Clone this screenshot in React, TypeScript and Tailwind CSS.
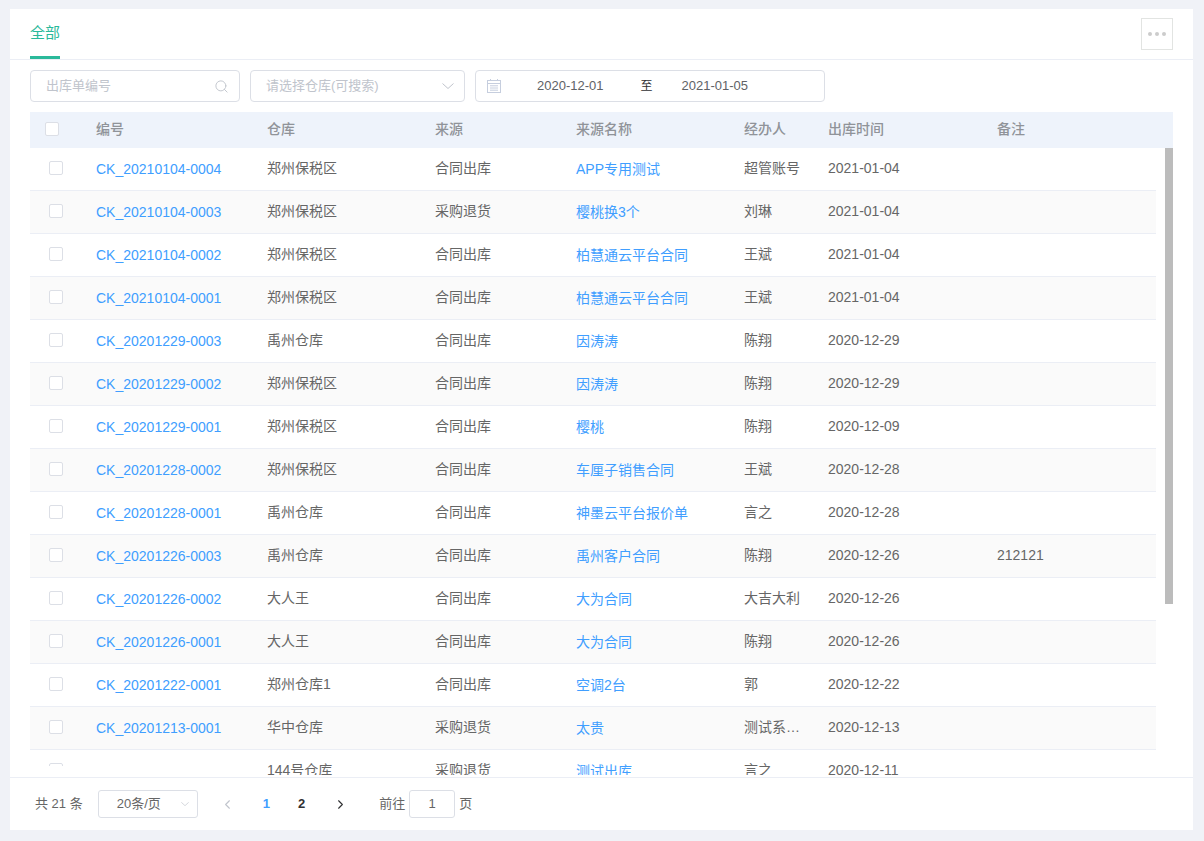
import { ChevronLeft, ChevronRight, Search } from 'lucide-react';

type Row = {
    code: string;
    warehouse: string;
    source: string;
    sourceName: string;
    handler: string;
    date: string;
    remark?: string;
};

const rows: Row[] = [
    { code: 'CK_20210104-0004', warehouse: '郑州保税区', source: '合同出库', sourceName: 'APP专用测试', handler: '超管账号', date: '2021-01-04' },
    { code: 'CK_20210104-0003', warehouse: '郑州保税区', source: '采购退货', sourceName: '樱桃换3个', handler: '刘琳', date: '2021-01-04' },
    { code: 'CK_20210104-0002', warehouse: '郑州保税区', source: '合同出库', sourceName: '柏慧通云平台合同', handler: '王斌', date: '2021-01-04' },
    { code: 'CK_20210104-0001', warehouse: '郑州保税区', source: '合同出库', sourceName: '柏慧通云平台合同', handler: '王斌', date: '2021-01-04' },
    { code: 'CK_20201229-0003', warehouse: '禹州仓库', source: '合同出库', sourceName: '因涛涛', handler: '陈翔', date: '2020-12-29' },
    { code: 'CK_20201229-0002', warehouse: '郑州保税区', source: '合同出库', sourceName: '因涛涛', handler: '陈翔', date: '2020-12-29' },
    { code: 'CK_20201229-0001', warehouse: '郑州保税区', source: '合同出库', sourceName: '樱桃', handler: '陈翔', date: '2020-12-09' },
    { code: 'CK_20201228-0002', warehouse: '郑州保税区', source: '合同出库', sourceName: '车厘子销售合同', handler: '王斌', date: '2020-12-28' },
    { code: 'CK_20201228-0001', warehouse: '禹州仓库', source: '合同出库', sourceName: '神墨云平台报价单', handler: '言之', date: '2020-12-28' },
    { code: 'CK_20201226-0003', warehouse: '禹州仓库', source: '合同出库', sourceName: '禹州客户合同', handler: '陈翔', date: '2020-12-26', remark: '212121' },
    { code: 'CK_20201226-0002', warehouse: '大人王', source: '合同出库', sourceName: '大为合同', handler: '大吉大利', date: '2020-12-26' },
    { code: 'CK_20201226-0001', warehouse: '大人王', source: '合同出库', sourceName: '大为合同', handler: '陈翔', date: '2020-12-26' },
    { code: 'CK_20201222-0001', warehouse: '郑州仓库1', source: '合同出库', sourceName: '空调2台', handler: '郭', date: '2020-12-22' },
    { code: 'CK_20201213-0001', warehouse: '华中仓库', source: '采购退货', sourceName: '太贵', handler: '测试系…', date: '2020-12-13' },
    { code: '', warehouse: '144号仓库', source: '采购退货', sourceName: '测试出库', handler: '言之', date: '2020-12-11' },
];

const columns = 'grid grid-cols-[66px_171px_168px_141px_168px_84px_169px_1fr]';

function Checkbox() {
    return <span className="block h-[14px] w-[14px] shrink-0 rounded-[2px] border border-[#dcdfe6] bg-white" />;
}

function CalendarIcon() {
    return (
        <svg width="14" height="14" viewBox="0 0 14 14" fill="none" stroke="#c6cede" strokeWidth="1">
            <rect x="0.5" y="1.5" width="13" height="12" />
            <path d="M0.5 4.5h13M3 6.8h8M3 9h8M3 11.2h8M3.5 0v2M10.5 0v2" />
        </svg>
    );
}

// flat select arrow, lucide's chevron is too steep for this one
function SelectArrow({ width }: { width: number }) {
    return (
        <svg width={width} height={width / 2} viewBox="0 0 12 6" fill="none" stroke="#c0c4cc" strokeWidth="1">
            <path d="M0.5 0.5L6 5.5L11.5 0.5" />
        </svg>
    );
}

export default function App() {
    return (
        <div
            className="h-[841px] w-[1204px] overflow-hidden bg-[#f0f2f7] pt-[9px] pr-[11px] pb-[11px] pl-[10px] text-[14px] text-[#666]"
            style={{ fontFamily: '"Liberation Sans", "Noto Sans CJK SC", sans-serif' }}
        >
            <div className="flex h-[821px] flex-col bg-white">
                {/* tab bar */}
                <div className="flex h-[51px] shrink-0 items-start justify-between border-b border-[#ebeef5] pr-5 pl-5">
                    <div className="flex h-[50px] w-[30px] items-center justify-center border-b-[3px] border-[#2bb99a] pt-[2px] text-[15px] text-[#2bb99a]">
                        全部
                    </div>
                    <div className="mt-[9px] flex h-[32px] w-[32px] items-center justify-center gap-[3px] border border-[#e2e4e2]">
                        <span className="h-1 w-1 rounded-full bg-[#ccc]" />
                        <span className="h-1 w-1 rounded-full bg-[#ccc]" />
                        <span className="h-1 w-1 rounded-full bg-[#ccc]" />
                    </div>
                </div>

                {/* filters */}
                <div className="mt-[10px] flex shrink-0 gap-[10px] pl-5 text-[13px]">
                    <div className="flex h-[32px] w-[210px] items-center justify-between rounded border border-[#dcdfe6] pr-[10px] pl-[15px] text-[#c0c4cc]">
                        <span>出库单编号</span>
                        <Search size={15} strokeWidth={1.5} className="text-[#c0c4cc]" />
                    </div>
                    <div className="flex h-[32px] w-[215px] items-center justify-between rounded border border-[#dcdfe6] pr-[10px] pl-[15px] text-[#c0c4cc]">
                        <span>请选择仓库(可搜索)</span>
                        <SelectArrow width={12} />
                    </div>
                    <div className="flex h-[32px] w-[350px] items-center rounded border border-[#dcdfe6] pl-[11px] text-[#606266]">
                        <CalendarIcon />
                        <span className="ml-[36px]">2020-12-01</span>
                        <span className="ml-[37px] text-[12px] text-[#303133]">至</span>
                        <span className="ml-[29px]">2021-01-05</span>
                    </div>
                </div>

                {/* table */}
                <div className="mt-[10px] ml-5 w-[1143px] shrink-0">
                    <div className={`${columns} h-[36px] items-center bg-[#eef3fb] pb-[2px] font-medium text-[#909399]`}>
                        <div className="pl-[15px]">
                            <Checkbox />
                        </div>
                        <div>编号</div>
                        <div>仓库</div>
                        <div>来源</div>
                        <div>来源名称</div>
                        <div>经办人</div>
                        <div>出库时间</div>
                        <div>备注</div>
                    </div>
                    <div className="flex h-[627px] overflow-hidden">
                        <div className="w-[1126px] shrink-0">
                            {rows.map((row, i) => (
                                <div
                                    key={i}
                                    className={`${columns} h-[43px] items-center border-b border-[#ebeef5] pb-[2px] ${i % 2 === 1 ? 'bg-[#fafafa]' : 'bg-white'}`}
                                >
                                    {row.code ? (
                                        <div className="pl-[19px]">
                                            <Checkbox />
                                        </div>
                                    ) : (
                                        <div className="mt-[13px] ml-[19px] h-[3px] self-start overflow-hidden">
                                            <Checkbox />
                                        </div>
                                    )}
                                    <div className="pt-[2px] text-[#409eff]">{row.code}</div>
                                    <div>{row.warehouse}</div>
                                    <div>{row.source}</div>
                                    <div className="pt-[2px] text-[#409eff]">{row.sourceName}</div>
                                    <div>{row.handler}</div>
                                    <div>{row.date}</div>
                                    <div>{row.remark}</div>
                                </div>
                            ))}
                        </div>
                        <div className="ml-[9px] h-[456px] w-2 shrink-0 bg-[#bcbcbc]" />
                    </div>
                </div>

                {/* pagination */}
                <div className="mt-[2px] flex h-[53px] shrink-0 items-center border-t border-[#ebeef5] pl-[25px] text-[13px]">
                    <span>共 21 条</span>
                    <div className="ml-[15px] flex h-[28px] w-[100px] items-center justify-between rounded-[3px] border border-[#dcdfe6] pr-[8px] pl-[18px]">
                        <span>20条/页</span>
                        <SelectArrow width={8} />
                    </div>
                    <ChevronLeft size={15} strokeWidth={1.75} className="ml-[22px] text-[#c0c4cc]" />
                    <span className="ml-[28px] font-bold text-[#409eff]">1</span>
                    <span className="ml-[28px] font-bold text-[#303133]">2</span>
                    <ChevronRight size={15} strokeWidth={1.75} className="ml-[28px] text-[#303133]" />
                    <span className="ml-[31px]">前往</span>
                    <div className="ml-[4px] flex h-[28px] w-[46px] items-center justify-center rounded-[3px] border border-[#dcdfe6]">1</div>
                    <span className="ml-[4px]">页</span>
                </div>
            </div>
        </div>
    );
}
